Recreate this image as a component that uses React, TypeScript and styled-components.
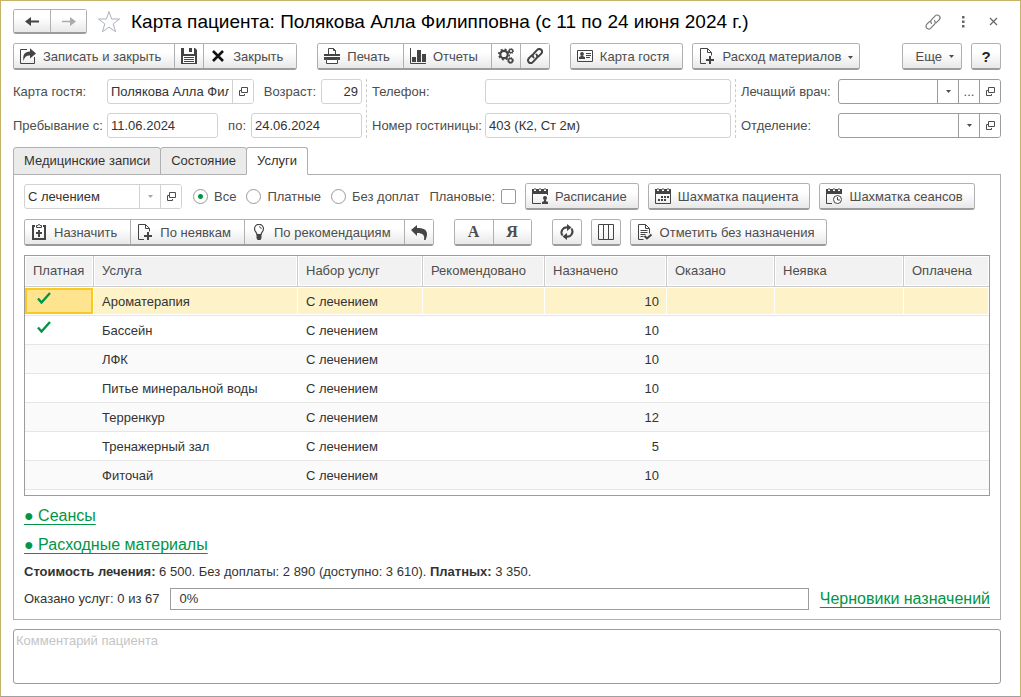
import React from "react";
import styled, { createGlobalStyle, css } from "styled-components";

const GlobalStyle = createGlobalStyle`
  *, *::before, *::after { box-sizing: border-box; }
  body { margin: 0; background: #fff; }
  body, button, input, select, textarea {
    font-family: "Liberation Sans", Arial, sans-serif;
    font-size: 13px;
    line-height: 16px;
    color: #333;
  }
  svg { display: block; flex: none; }
`;

const Window = styled.main`
  min-height: 100vh;
  padding: 8px 19px 12px 12px;
  border: 1px solid #c6b268;
  border-bottom-color: #a0a0a0;
  display: flex;
  flex-direction: column;
`;

const TitleBar = styled.header`
  display: flex;
  align-items: center;
  height: 25px;
`;

const Title = styled.h1`
  flex: 1;
  margin: 0 0 0 10px;
  font-size: 19px;
  line-height: 24px;
  font-weight: 400;
  color: #000;
  white-space: nowrap;
`;

const ButtonGroup = styled.div`
  display: flex;
  flex: none;
  border: 1px solid #b0b0b0;
  border-bottom: 2px solid #9c9c9c;
  border-radius: 3px;
`;

const Button = styled.button<{ $kind?: "icon" | "letter" | "nav" | "more" | "menu" | "snug" }>`
  display: flex;
  align-items: center;
  gap: 7px;
  height: 24px;
  border: 0;
  border-radius: 2px;
  padding: 2px 13px 0 6px;
  background: linear-gradient(#fff 35%, #e8e8e8);
  color: #4d4d4d;
  white-space: nowrap;
  & > svg:first-child { margin-bottom: 2px; }
  & + & { border-left: 1px solid #b0b0b0; border-radius: 0; }
  ${(p) => p.$kind === "icon" && css`
    &&& { width: 29px; padding: 2px 0 0; justify-content: center; }
    &&&:only-child { width: 28px; }
  `}
  ${(p) => p.$kind === "letter" && css`
    &&& { width: 38px; padding: 0; justify-content: center; font: bold 16px/20px "Liberation Serif", serif; }
  `}
  ${(p) => p.$kind === "nav" && css`&&& { width: 36px; height: 22px; padding: 2px 0 0; justify-content: center; }`}
  ${(p) => p.$kind === "more" && css`padding: 2px 7px 0 13px;`}
  ${(p) => p.$kind === "menu" && css`padding-right: 6px;`}
  ${(p) => p.$kind === "snug" && css`padding-right: 11px;`}
`;

const StarButton = styled.button`
  padding: 0;
  margin-left: 10px;
  border: 0;
  background: none;
`;

const TitleActions = styled.div`
  display: flex;
  align-items: center;
  gap: 14px;
`;

const PlainButton = styled.button`
  display: flex;
  align-items: center;
  justify-content: center;
  width: 16px;
  height: 20px;
  padding: 0;
  border: 0;
  background: none;
  color: #666;
`;

const HelpMark = styled.b`
  font-size: 15px;
  color: #222;
`;

const Toolbar = styled.div`
  display: flex;
  align-items: center;
  gap: 20px;
  margin-top: 9px;
`;

const Cluster = styled.div<{ $push?: boolean }>`
  display: flex;
  gap: 9px;
  margin-left: ${(p) => (p.$push ? "auto" : "0")};
`;

const PatientForm = styled.form`
  display: flex;
  margin-top: 9px;
`;

const FormColumn = styled.div<{ $grow?: boolean; $width?: number }>`
  display: flex;
  flex-direction: column;
  gap: 9px;
  ${(p) => (p.$grow ? css`flex: 1; min-width: 200px;` : css`flex: none; width: ${p.$width}px;`)}
  & + & {
    margin-left: 4px;
    padding-left: 5px;
    border-left: 1px dashed #ccc;
  }
`;

const FieldRow = styled.div`
  display: flex;
  align-items: center;
  height: 25px;
  justify-content: space-between;
`;

const Field = styled.div<{ $gap?: number }>`
  display: flex;
  align-items: center;
  gap: ${(p) => p.$gap ?? 0}px;
`;

const Label = styled.label<{ $width?: number }>`
  flex: none;
  width: ${(p) => (p.$width ? `${p.$width}px` : "auto")};
  color: #4d4d4d;
  white-space: nowrap;
`;

const FieldBox = styled.div<{ $width?: number; $strong?: boolean }>`
  --line: ${(p) => (p.$strong ? "#9c9c9c" : "#d2d2d2")};
  display: flex;
  height: 25px;
  border: 1px solid var(--line);
  border-radius: 3px;
  background: #fff;
  overflow: hidden;
  ${(p) => (p.$width ? css`flex: none; width: ${p.$width}px;` : css`flex: 1;`)}
`;

const TextInput = styled.input<{ $right?: boolean }>`
  flex: 1;
  min-width: 0;
  width: 100%;
  padding: 0 3px;
  border: 0;
  background: none;
  outline: none;
  text-align: ${(p) => (p.$right ? "right" : "left")};
`;

const FieldButton = styled.button`
  display: flex;
  flex: none;
  align-items: center;
  justify-content: center;
  width: 21px;
  padding: 0;
  border: 0;
  border-left: 1px solid var(--line);
  background: #fff;
  color: #4d4d4d;
`;

const SelectWrap = styled.div`
  position: relative;
  flex: 1;
  display: flex;
  min-width: 0;
`;

const Select = styled.select`
  appearance: none;
  width: 100%;
  padding: 0 24px 0 3px;
  border: 0;
  background: none;
  outline: none;
`;

const SelectArrow = styled.span<{ $faint?: boolean }>`
  position: absolute;
  inset: 0 0 0 auto;
  width: 21px;
  display: flex;
  align-items: center;
  justify-content: center;
  border-left: 1px solid var(--line);
  color: ${(p) => (p.$faint ? "#a6a6a6" : "#4d4d4d")};
  pointer-events: none;
`;

const Tabs = styled.div`
  display: flex;
  margin-top: 9px;
  margin-bottom: -1px;
`;

const Tab = styled.button<{ $active?: boolean }>`
  height: 28px;
  padding: 0 10px;
  border: 1px solid #b0b0b0;
  border-bottom-color: ${(p) => (p.$active ? "#fff" : "#b0b0b0")};
  border-radius: 3px 3px 0 0;
  background: ${(p) => (p.$active ? "#fff" : "#ebebeb")};
  color: #333;
  position: relative;
  white-space: nowrap;
  & + & { margin-left: -1px; }
`;

const Panel = styled.section`
  padding: 8px 10px 9px;
  border: 1px solid #b0b0b0;
`;

const FilterRow = styled.div`
  display: flex;
  align-items: center;
  height: 27px;
`;

const Radios = styled.fieldset`
  display: flex;
  gap: 10px;
  margin: 0 10px 0 11px;
  padding: 0;
  border: 0;
`;

const Choice = styled.label`
  display: flex;
  align-items: center;
  gap: 6px;
  color: #4d4d4d;
  white-space: nowrap;
`;

const Radio = styled.input`
  appearance: none;
  width: 15px;
  height: 15px;
  margin: 0;
  border: 1px solid #999;
  border-radius: 50%;
  &:checked { background: radial-gradient(circle, #009646 0 2px, #fff 3px); }
`;

const Checkbox = styled.input`
  appearance: none;
  width: 15px;
  height: 15px;
  margin: 0 9px 0 0;
  border: 1px solid #999;
  border-radius: 2px;
  background: #fff;
`;

const TableFrame = styled.div`
  height: 241px;
  margin-top: 9px;
  border: 1px solid #9c9c9c;
  overflow: hidden;
`;

const Table = styled.table`
  width: 100%;
  table-layout: fixed;
  border-collapse: separate;
  border-spacing: 0;
`;

const HeadCell = styled.th`
  height: 31px;
  padding: 0 8px;
  border-right: 1px solid #ccc;
  border-bottom: 1px solid #ccc;
  box-shadow: inset 0 0 0 1px #fff;
  background: #f2f2f2;
  color: #4d4d4d;
  font-weight: 400;
  text-align: left;
  &:last-child { border-right: 0; }
`;

const Row = styled.tr<{ $selected?: boolean }>`
  background: ${(p) => (p.$selected ? "#fdf2c8" : "#fff")};
  &:nth-child(n + 3):nth-child(odd) { background: #fafafa; }
`;

const Cell = styled.td<{ $number?: boolean; $focus?: boolean; $selected?: boolean }>`
  height: 29px;
  padding: 2px 8px 0;
  border-bottom: 1px solid #e6e6e6;
  text-align: ${(p) => (p.$number ? "right" : "left")};
  ${(p) => p.$selected && css`box-shadow: inset -1px 0 #fff, inset 0 1px #fff, inset 0 -1px #fff;`}
  ${(p) => p.$focus && css`background: #ffe48f; box-shadow: inset -1px 0 #fff, inset 0 1px #fff, inset 0 -1px #fff, inset -3px -3px #f9c920, inset 2px 3px #f9c920;`}
`;

const CheckSlot = styled.span`
  display: block;
  padding: 0 0 8px 4px;
`;

const Links = styled.nav`
  display: flex;
  flex-direction: column;
  align-items: flex-start;
  gap: 9px;
  margin-top: 10px;
`;

const GreenLink = styled.a`
  font-size: 16px;
  line-height: 20px;
  color: #009646;
  white-space: nowrap;
  text-decoration: underline;
  text-underline-offset: 3px;
`;

const Summary = styled.p`
  margin: 9px 0 8px;
`;

const ProgressRow = styled.div`
  display: flex;
  align-items: center;
  gap: 11px;
`;

const Progress = styled.div`
  flex: 1;
  height: 22px;
  padding: 2px 8px;
  border: 1px solid #9c9c9c;
`;

const Comment = styled.textarea`
  display: block;
  width: 100%;
  height: 55px;
  margin-top: 9px;
  padding: 3px 2px;
  border: 1px solid #9c9c9c;
  border-radius: 3px;
  resize: none;
  outline: none;
  &::placeholder { color: #c4c4c4; opacity: 1; }
`;

const ink = "#444";

const Icon = ({ children, size = 16 }: { children: React.ReactNode; size?: number }) => (
  <svg width={size} height={size} viewBox={`0 0 ${size} ${size}`} fill="none" stroke="none" aria-hidden="true">
    {children}
  </svg>
);

const ArrowIcon = ({ back }: { back?: boolean }) => (
  <Icon>
    <path
      d={back ? "M1 8.500l6-4.500v3.500h8v2H7V13z" : "M15 8.500L9 4v3.700H1v1.600h8V13z"}
      fill={back ? ink : "#aaa"}
    />
  </Icon>
);

const StarIcon = () => (
  <Icon size={24}>
    <path d="M12 1.500l2.600 7.500h8l-6.400 4.900 2.400 7.900-6.600-4.700-6.600 4.700 2.400-7.900L1.400 9h8z" stroke="#aab2bb" />
  </Icon>
);

const SaveCloseIcon = () => (
  <Icon>
    <path d="M7 1.500H.5v14h14V9" stroke={ink} />
    <path d="M3.500 13C2.500 7 4.500 3.500 10 3.500V.3L16 5.500l-6 5V7.500C6.500 7.300 4.500 9 3.500 13z" fill={ink} />
  </Icon>
);

const DiskIcon = () => (
  <Icon>
    <path d="M0 0h3v6h10V0h1l2 2v14H0zM8 0h3v4H8z" fill={ink} fillRule="evenodd" />
    <path d="M2 8h12v7H2z" fill="#fff" />
    <path d="M3 9.500h10M3 11.500h10M3 13.500h10" stroke={ink} />
  </Icon>
);

const CrossIcon = () => (
  <Icon>
    <path d="M3 3l10 10M13 3L3 13" stroke="#111" strokeWidth="2.600" />
  </Icon>
);

const PrinterIcon = () => (
  <Icon>
    <path d="M4.500 6V.5h5l2 2V6M9.500.5v2h2" stroke={ink} />
    <path d="M4 5h1v1h6V5h1v1h4v2H0V6h4zM0 9h16v3h-2v-1H2v1H0z" fill={ink} />
    <path d="M2.500 11.500h11v4h-11z" fill="#fff" stroke={ink} />
  </Icon>
);

const ChartIcon = () => (
  <Icon>
    <path d="M.5 0v15.500H16" stroke={ink} />
    <path d="M2 9h4v5H2zM7 2h4v12H7zM12 6h4v8h-4z" fill={ink} />
  </Icon>
);

const GearsIcon = () => (
  <Icon>
    <circle cx="6" cy="6.500" r="3.700" stroke={ink} strokeWidth="2.200" />
    <circle cx="6" cy="6.500" r="5.200" stroke={ink} strokeWidth="1.600" strokeDasharray="2 2.080" />
    <circle cx="13" cy="3" r="1.700" stroke={ink} strokeWidth="1.300" />
    <circle cx="13" cy="3" r="2.600" stroke={ink} strokeDasharray="1 1.040" />
    <circle cx="12.500" cy="12.500" r="2" stroke={ink} strokeWidth="1.500" />
    <circle cx="12.500" cy="12.500" r="3" stroke={ink} strokeDasharray="1.200 1.150" />
  </Icon>
);

const ChainIcon = ({ thin }: { thin?: boolean }) => (
  <Icon>
    <g stroke={thin ? "#777" : ink} strokeWidth={thin ? 1.2 : 2} strokeLinecap="round">
      <path d="M6.500 9.500C5.300 8 5.500 6.800 6.600 5.700l3.600-3.800c1.200-1.200 2.900-1.200 4-.1s1.100 2.800-.1 4L11.300 8.600" />
      <path d="M9.500 6.500c1.200 1.500 1 2.700-.1 3.800l-3.600 3.800c-1.200 1.200-2.900 1.200-4 .1s-1.100-2.800.1-4L4.700 7.400" />
    </g>
  </Icon>
);

const CardIcon = () => (
  <Icon>
    <path d="M.5 2.500h15v11H.5z" stroke={ink} />
    <circle cx="5" cy="6" r="1.900" fill={ink} />
    <path d="M2 11V9.200L4 8h2l2 1.200V11zM9 5h5v1H9zM9 7h5v1H9zM9 9h4v1H9z" fill={ink} />
  </Icon>
);

const DocPlusIcon = () => (
  <Icon>
    <path d="M7 15.500H1.500V.5h7l4 4v3M8.500.5v4h4" stroke={ink} />
    <path d="M10 8h2v3h3v2h-3v3h-2v-3H7v-2h3z" fill={ink} />
  </Icon>
);

const ClipboardIcon = () => (
  <Icon>
    <path d="M4 2H2v13h12V2h-2" stroke={ink} strokeWidth="2" />
    <path d="M5.500 3.500v-2h1.500l.5-1h1l.5 1h1.500v2z" stroke={ink} />
    <path d="M7 6h2v2h2v2H9v3H7v-3H5V8h2z" fill={ink} />
  </Icon>
);

const BulbIcon = () => (
  <Icon>
    <path d="M6 10.500C5.800 8.500 3.500 7.500 3.500 4.800a4.500 4.500 0 019 0c0 2.700-2.300 3.700-2.500 5.700z" stroke={ink} strokeWidth="1.200" />
    <path d="M8 2.800c1.300 0 2.200.9 2.200 2.200" stroke={ink} />
    <path d="M5.500 10h5v4L9.500 16h-3l-1-2z" fill={ink} />
  </Icon>
);

const UndoIcon = () => (
  <Icon>
    <path d="M0 6l6-5v3c6 0 10 1.500 10 6 0 2-.6 4-1.500 6H13c1-4.500-1-7-7-7v3z" fill={ink} />
  </Icon>
);

const RefreshIcon = () => (
  <Icon>
    <path d="M3.600 11.500A5 5 0 018.500 3.500M12.400 4.500A5 5 0 017.500 12.500" stroke={ink} strokeWidth="2" />
    <path d="M8 0l4.500 3.500L8 7zM8 9v7l-4.500-3.500z" fill={ink} />
  </Icon>
);

const ColumnsIcon = () => (
  <Icon>
    <path d="M.5.500h15v15H.5zM5.500.500v15M10.500.500v15" stroke={ink} />
  </Icon>
);

const DocCheckIcon = () => (
  <Icon>
    <path d="M6.500 15.500h-5V.5h7l4 4v5M8.500.5v4h4M3.500 6.500h7M3.500 8.500h7M3.500 10.500h5M3.500 12.500h3" stroke={ink} />
    <path d="M7.500 12l2.500 2.500 4.500-4" stroke={ink} strokeWidth="2" />
  </Icon>
);

const CalendarIcon = ({ kind }: { kind: "person" | "grid" | "clock" }) => (
  <Icon>
    <path d="M0 1h2v2h2V1h3v2h2V1h3v2h2V1h2v5H0z" fill={ink} />
    <path d="M3 0v2M8 0v2M13 0v2" stroke={ink} />
    {kind === "person" && (
      <>
        <path d="M.5 6v9.500H9M15.500 6v1" stroke={ink} />
        <circle cx="13" cy="10" r="2" fill={ink} />
        <path d="M10 16v-2l2-1v-1.500h2V13l2 1v2z" fill={ink} />
      </>
    )}
    {kind === "grid" && (
      <>
        <path d="M.5 6v9.500h15V6" stroke={ink} />
        <path d="M6 9h2M9 9h2M12 9h2M3 12h2M6 12h2M9 12h2" stroke={ink} strokeWidth="2" />
      </>
    )}
    {kind === "clock" && (
      <>
        <path d="M.5 6v9.500H6" stroke={ink} />
        <circle cx="11.500" cy="11.500" r="4" stroke={ink} fill="#fff" />
        <path d="M11.500 9v3H14" stroke={ink} />
      </>
    )}
  </Icon>
);

const OpenIcon = () => (
  <Icon size={11}>
    <path d="M3.500 1.500h6v5h-6zM3 4.500H1.500v5h5V8" stroke="#4d4d4d" />
  </Icon>
);

const CaretIcon = () => (
  <svg width="5" height="3" viewBox="0 0 5 3" aria-hidden="true">
    <path d="M0 0h5L2.500 3z" fill="currentColor" />
  </svg>
);

const DotsIcon = () => (
  <Icon>
    <path d="M7 2h2.500v2.500H7zM7 6.500h2.500V9H7zM7 11h2.500v2.500H7z" fill="#666" />
  </Icon>
);

const CloseIcon = () => (
  <Icon size={9}>
    <path d="M1 1l7 7M8 1L1 8" stroke="#666" strokeWidth="1.200" />
  </Icon>
);

const CheckIcon = () => (
  <svg width="14" height="12" viewBox="0 0 14 12" fill="none" role="img" aria-label="Да">
    <path d="M1 6.500l3.500 4L13 1" stroke="#009646" strokeWidth="2.400" />
  </svg>
);

const columns: [string, number?][] = [
  ["Платная", 69],
  ["Услуга", 204],
  ["Набор услуг", 125],
  ["Рекомендовано", 122],
  ["Назначено", 122],
  ["Оказано", 108],
  ["Неявка", 129],
  ["Оплачена"],
];

const services = [
  { name: "Ароматерапия", paid: true, count: 10 },
  { name: "Бассейн", paid: true, count: 10 },
  { name: "ЛФК", paid: false, count: 10 },
  { name: "Питье минеральной воды", paid: false, count: 10 },
  { name: "Терренкур", paid: false, count: 12 },
  { name: "Тренажерный зал", paid: false, count: 5 },
  { name: "Фиточай", paid: false, count: 10 },
];

const OpenButton = () => (
  <FieldButton type="button" aria-label="Открыть">
    <OpenIcon />
  </FieldButton>
);

export default function App() {
  return (
    <Window>
      <GlobalStyle />
      <TitleBar>
        <ButtonGroup>
          <Button $kind="nav" aria-label="Назад"><ArrowIcon back /></Button>
          <Button $kind="nav" aria-label="Вперед"><ArrowIcon /></Button>
        </ButtonGroup>
        <StarButton aria-label="В избранное"><StarIcon /></StarButton>
        <Title>Карта пациента: Полякова Алла Филипповна (с 11 по 24 июня 2024 г.)</Title>
        <TitleActions>
          <PlainButton aria-label="Ссылка"><ChainIcon thin /></PlainButton>
          <PlainButton aria-label="Меню"><DotsIcon /></PlainButton>
          <PlainButton aria-label="Закрыть окно"><CloseIcon /></PlainButton>
        </TitleActions>
      </TitleBar>

      <Toolbar>
        <ButtonGroup>
          <Button><SaveCloseIcon />Записать и закрыть</Button>
          <Button $kind="icon" aria-label="Записать"><DiskIcon /></Button>
          <Button><CrossIcon />Закрыть</Button>
        </ButtonGroup>
        <ButtonGroup>
          <Button><PrinterIcon />Печать</Button>
          <Button><ChartIcon />Отчеты</Button>
          <Button $kind="icon" aria-label="Настройки"><GearsIcon /></Button>
          <Button $kind="icon" aria-label="Связи"><ChainIcon /></Button>
        </ButtonGroup>
        <Cluster>
          <ButtonGroup><Button><CardIcon />Карта гостя</Button></ButtonGroup>
          <ButtonGroup><Button $kind="menu"><DocPlusIcon />Расход материалов<CaretIcon /></Button></ButtonGroup>
        </Cluster>
        <Cluster $push>
          <ButtonGroup><Button $kind="more">Еще<CaretIcon /></Button></ButtonGroup>
          <ButtonGroup><Button $kind="icon" aria-label="Справка"><HelpMark>?</HelpMark></Button></ButtonGroup>
        </Cluster>
      </Toolbar>

      <PatientForm>
        <FormColumn $width={349}>
          <FieldRow>
            <Field>
              <Label htmlFor="guest" $width={94}>Карта гостя:</Label>
              <FieldBox $width={147}>
                <TextInput id="guest" defaultValue="Полякова Алла Филипповна" />
                <OpenButton />
              </FieldBox>
            </Field>
            <Field $gap={5}>
              <Label htmlFor="age">Возраст:</Label>
              <FieldBox $width={41}><TextInput id="age" $right defaultValue="29" /></FieldBox>
            </Field>
          </FieldRow>
          <FieldRow>
            <Field>
              <Label htmlFor="from" $width={94}>Пребывание с:</Label>
              <FieldBox $width={111}><TextInput id="from" defaultValue="11.06.2024" /></FieldBox>
            </Field>
            <Field $gap={5}>
              <Label htmlFor="to">по:</Label>
              <FieldBox $width={111}><TextInput id="to" defaultValue="24.06.2024" /></FieldBox>
            </Field>
          </FieldRow>
        </FormColumn>
        <FormColumn $grow>
          <FieldRow>
            <Label htmlFor="phone" $width={113}>Телефон:</Label>
            <FieldBox><TextInput id="phone" /></FieldBox>
          </FieldRow>
          <FieldRow>
            <Label htmlFor="room" $width={113}>Номер гостиницы:</Label>
            <FieldBox><TextInput id="room" defaultValue="403 (К2, Ст 2м)" /></FieldBox>
          </FieldRow>
        </FormColumn>
        <FormColumn $width={266}>
          <FieldRow>
            <Label htmlFor="doctor" $width={97}>Лечащий врач:</Label>
            <FieldBox $strong>
              <SelectWrap>
                <Select id="doctor"><option /></Select>
                <SelectArrow><CaretIcon /></SelectArrow>
              </SelectWrap>
              <FieldButton type="button">...</FieldButton>
              <OpenButton />
            </FieldBox>
          </FieldRow>
          <FieldRow>
            <Label htmlFor="unit" $width={97}>Отделение:</Label>
            <FieldBox $strong>
              <SelectWrap>
                <Select id="unit"><option /></Select>
                <SelectArrow><CaretIcon /></SelectArrow>
              </SelectWrap>
              <OpenButton />
            </FieldBox>
          </FieldRow>
        </FormColumn>
      </PatientForm>

      <Tabs role="tablist">
        <Tab role="tab">Медицинские записи</Tab>
        <Tab role="tab">Состояние</Tab>
        <Tab role="tab" aria-selected $active>Услуги</Tab>
      </Tabs>

      <Panel>
        <FilterRow>
          <FieldBox $width={158}>
            <SelectWrap>
              <Select aria-label="Набор услуг"><option>С лечением</option></Select>
              <SelectArrow $faint><CaretIcon /></SelectArrow>
            </SelectWrap>
            <OpenButton />
          </FieldBox>
          <Radios>
            <Choice><Radio type="radio" name="pay" defaultChecked />Все</Choice>
            <Choice><Radio type="radio" name="pay" />Платные</Choice>
            <Choice><Radio type="radio" name="pay" />Без доплат</Choice>
          </Radios>
          <Choice>Плановые:<Checkbox type="checkbox" /></Choice>
          <Cluster>
            <ButtonGroup><Button $kind="snug"><CalendarIcon kind="person" />Расписание</Button></ButtonGroup>
            <ButtonGroup><Button $kind="snug"><CalendarIcon kind="grid" />Шахматка пациента</Button></ButtonGroup>
            <ButtonGroup><Button $kind="snug"><CalendarIcon kind="clock" />Шахматка сеансов</Button></ButtonGroup>
          </Cluster>
        </FilterRow>

        <Toolbar>
          <ButtonGroup>
            <Button>
              <ClipboardIcon />Назначить
            </Button>
            <Button><DocPlusIcon />По неявкам</Button>
            <Button><BulbIcon />По рекомендациям</Button>
            <Button $kind="icon" aria-label="Отменить"><UndoIcon /></Button>
          </ButtonGroup>
          <ButtonGroup>
            <Button $kind="letter">А</Button>
            <Button $kind="letter">Я</Button>
          </ButtonGroup>
          <Cluster>
            <ButtonGroup><Button $kind="icon" aria-label="Обновить"><RefreshIcon /></Button></ButtonGroup>
            <ButtonGroup><Button $kind="icon" aria-label="Колонки"><ColumnsIcon /></Button></ButtonGroup>
            <ButtonGroup><Button $kind="snug"><DocCheckIcon />Отметить без назначения</Button></ButtonGroup>
          </Cluster>
        </Toolbar>

        <TableFrame>
          <Table>
            <colgroup>
              {columns.map(([name, width]) => <col key={name} width={width} />)}
            </colgroup>
            <thead>
              <tr>{columns.map(([name]) => <HeadCell key={name} scope="col">{name}</HeadCell>)}</tr>
            </thead>
            <tbody>
              {services.map((s, i) => {
                const selected = i === 0;
                return (
                  <Row key={s.name} $selected={selected}>
                    <Cell $selected={selected} $focus={selected}>
                      {s.paid && <CheckSlot><CheckIcon /></CheckSlot>}
                    </Cell>
                    <Cell $selected={selected}>{s.name}</Cell>
                    <Cell $selected={selected}>С лечением</Cell>
                    <Cell $selected={selected} />
                    <Cell $selected={selected} $number>{s.count}</Cell>
                    <Cell $selected={selected} />
                    <Cell $selected={selected} />
                    <Cell $selected={selected} />
                  </Row>
                );
              })}
            </tbody>
          </Table>
        </TableFrame>

        <Links>
          <GreenLink href="#sessions">● Сеансы</GreenLink>
          <GreenLink href="#materials">● Расходные материалы</GreenLink>
        </Links>
        <Summary>
          <b>Стоимость лечения:</b> 6 500. Без доплаты: 2 890 (доступно: 3 610). <b>Платных:</b> 3 350.
        </Summary>
        <ProgressRow>
          <span>Оказано услуг: 0 из 67</span>
          <Progress role="progressbar" aria-valuenow={0}>0%</Progress>
          <GreenLink href="#drafts">Черновики назначений</GreenLink>
        </ProgressRow>
      </Panel>

      <Comment placeholder="Комментарий пациента" aria-label="Комментарий пациента" />
    </Window>
  );
}
